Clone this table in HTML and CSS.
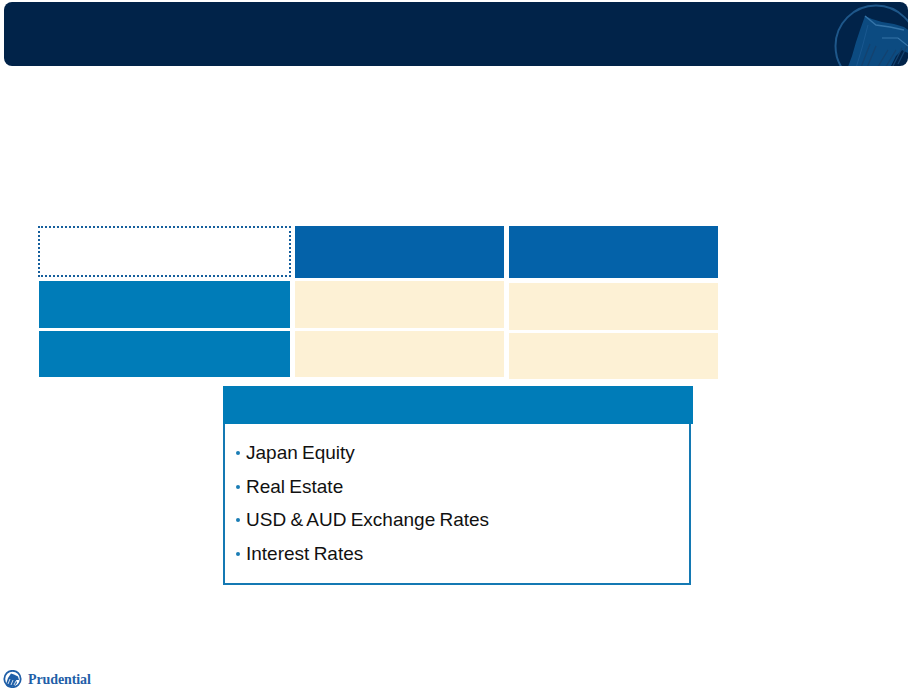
FILE: index.html
```html
<!DOCTYPE html>
<html>
<head>
<meta charset="utf-8">
<link rel="stylesheet" href="styles.css">
</head>
<body>
<div class="slide">
  <header class="topbar">
    <svg class="rock" width="76" height="64" viewBox="0 0 76 64">
      <defs><clipPath id="c"><circle cx="44" cy="44" r="41"/></clipPath></defs>
      <g clip-path="url(#c)">
        <path d="M14 70 L20 54 L24 40 L28 28 L33 14 L40 17 L50 20 L62 22 L72 25 L78 29 L78 52 L70 48 L64 54 L56 70 Z" fill="#0c4b81"/>
        <path d="M33 14 L44 23 L58 25 L72 28" fill="none" stroke="#3574a8" stroke-width="1.4"/>
        <path d="M36 23 L30 46 L24 66" fill="none" stroke="#1a5890" stroke-width="1"/>
        <path d="M28 68 L38 42 M34 68 L44 44 M44 68 L56 48 M52 68 L64 48 M60 66 L70 46 M66 62 L76 42" fill="none" stroke="#14426f" stroke-width="1.3"/>
        <path d="M50 36 L66 36 L76 44" fill="none" stroke="#3574a8" stroke-width="1.2"/>
      </g>
      <circle cx="44" cy="44" r="40.5" fill="none" stroke="#1e578a" stroke-width="2"/>
    </svg>
  </header>

  <section class="grid">
    <div class="cell corner"></div>
    <div class="cell head"></div>
    <div class="cell head"></div>
    <div class="cell side"></div>
    <div class="cell beige"></div>
    <div class="cell beige shift"></div>
    <div class="cell side"></div>
    <div class="cell beige"></div>
    <div class="cell beige shift"></div>
  </section>

  <section class="box">
    <div class="box-head"></div>
    <ul class="box-body">
      <li>Japan Equity</li>
      <li>Real Estate</li>
      <li>USD &amp; AUD Exchange Rates</li>
      <li>Interest Rates</li>
    </ul>
  </section>

  <footer class="brand">
    <svg class="brand-icon" width="19" height="18" viewBox="0 0 19 18">
      <circle cx="9.5" cy="9" r="8.2" fill="none" stroke="#1f5fa8" stroke-width="1.8"/>
      <path d="M3 14 L5 8 L8 3.5 L11 4.5 L15 6.5 L16 10 L13 10 L14 13 L11 16.5 L4 16.5 Z" fill="#1f5fa8"/>
      <path d="M5 14 L7 9 M8 15 L10 10 M11 15 L13 11" stroke="#ffffff" stroke-width="0.8"/>
    </svg>
    <span class="brand-name">Prudential</span>
  </footer>
</div>
</body>
</html>
```

FILE: styles.css
```css
html, body {
  margin: 0;
  padding: 0;
  background: #ffffff;
}
.slide {
  width: 910px;
  height: 693px;
  position: relative;
  overflow: hidden;
  font-family: "Liberation Sans", Arial, sans-serif;
}
.topbar {
  margin: 2px 2px 0 4px;
  height: 64px;
  background: #012349;
  border-radius: 8px;
  display: flex;
  justify-content: flex-end;
  overflow: hidden;
}
.rock {
  display: block;
}
.grid {
  margin: 160px 0 0 38px;
  display: grid;
  grid-template-columns: 253px 209px 210px;
  grid-template-rows: 52px 47px 46px;
  column-gap: 4px;
  row-gap: 3px;
  width: 681px;
}
.grid .cell:nth-child(3n+3) {
  margin-left: 1px;
}
.cell.corner {
  border: 2px dotted #165f9c;
  background: #ffffff;
  box-sizing: border-box;
  height: 51px;
}
.cell.head {
  background: #0462a9;
}
.cell.side {
  background: #007cb8;
  margin-left: 1px;
  margin-right: 1px;
}
.cell.beige {
  background: #fdf1d5;
}
.cell.shift {
  transform: translateY(2px);
}
.box {
  margin: 9px 0 0 223px;
  width: 470px;
}
.box-head {
  height: 38px;
  background: #007cb8;
}
.box-body {
  margin: 0;
  width: 468px;
  height: 161px;
  box-sizing: border-box;
  border: 2px solid #1479b3;
  border-top: none;
  list-style: none;
  padding: 12px 0 0 11px;
}
.box-body li {
  font-size: 19px;
  line-height: 33.5px;
  color: #111111;
  display: flex;
  align-items: center;
  word-spacing: -1px;
}
.box-body li::before {
  content: "";
  width: 4px;
  height: 4px;
  border-radius: 50%;
  background: #1a7db5;
  margin-right: 6px;
  margin-top: 1px;
}
.brand {
  position: absolute;
  left: 3px;
  top: 669px;
  display: flex;
  align-items: center;
  gap: 6px;
}
.brand-icon {
  display: block;
}
.brand-name {
  font-family: "Liberation Serif", "Times New Roman", serif;
  font-weight: bold;
  font-size: 14px;
  color: #1f5fa8;
  letter-spacing: -0.1px;
  margin-top: 3px;
}
```
